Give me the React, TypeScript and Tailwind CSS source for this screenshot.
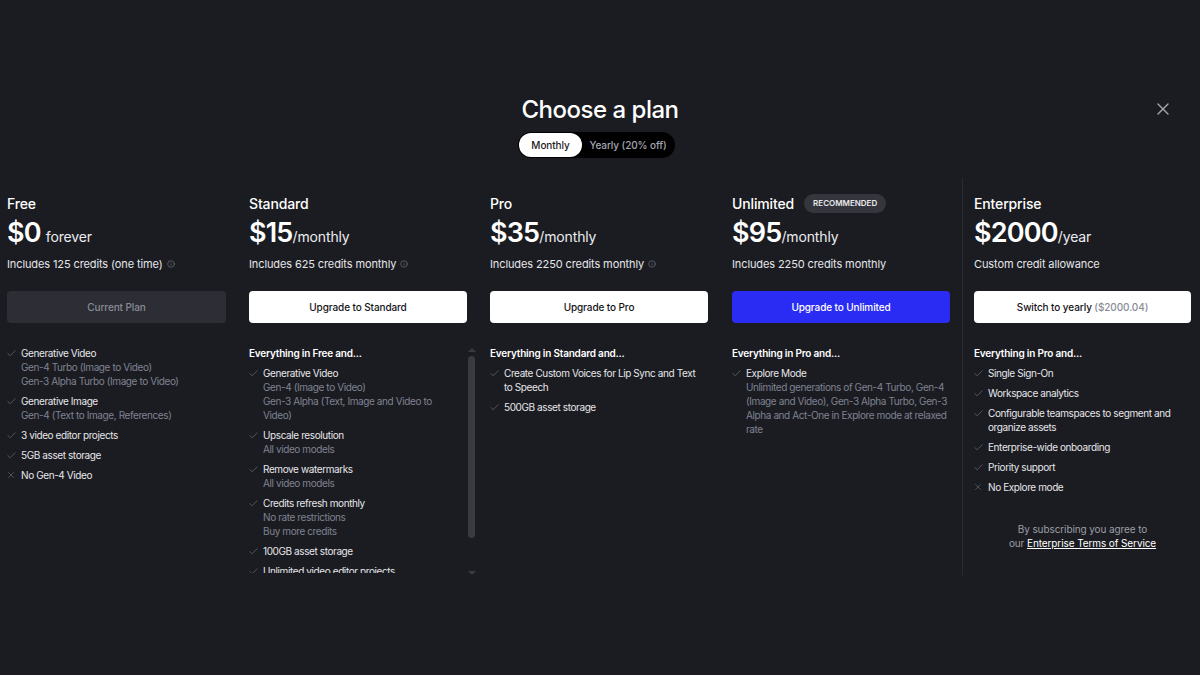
import React from "react";
import { Check, X, Info } from "lucide-react";

type Feature = { text: string; sub?: string[]; no?: boolean };
type Plan = {
  name: string;
  price: string;
  unit: string;
  spaced?: boolean;
  credits: string;
  info?: boolean;
  button: React.ReactNode;
  variant: "current" | "white" | "blue";
  heading?: string;
  features: Feature[];
  badge?: boolean;
  pr?: string;
};

const plans: Plan[] = [
  {
    name: "Free",
    price: "$0",
    unit: "forever",
    spaced: true,
    credits: "Includes 125 credits (one time)",
    info: true,
    button: "Current Plan",
    variant: "current",
    features: [
      { text: "Generative Video", sub: ["Gen-4 Turbo (Image to Video)", "Gen-3 Alpha Turbo (Image to Video)"] },
      { text: "Generative Image", sub: ["Gen-4 (Text to Image, References)"] },
      { text: "3 video editor projects" },
      { text: "5GB asset storage" },
      { text: "No Gen-4 Video", no: true },
    ],
  },
  {
    name: "Standard",
    price: "$15",
    unit: "/monthly",
    credits: "Includes 625 credits monthly",
    info: true,
    button: "Upgrade to Standard",
    variant: "white",
    heading: "Everything in Free and...",
    features: [
      { text: "Generative Video", sub: ["Gen-4 (Image to Video)", "Gen-3 Alpha (Text, Image and Video to Video)"] },
      { text: "Upscale resolution", sub: ["All video models"] },
      { text: "Remove watermarks", sub: ["All video models"] },
      { text: "Credits refresh monthly", sub: ["No rate restrictions", "Buy more credits"] },
      { text: "100GB asset storage" },
      { text: "Unlimited video editor projects" },
      { text: "Custom voices for Lip Sync" },
    ],
  },
  {
    name: "Pro",
    price: "$35",
    unit: "/monthly",
    credits: "Includes 2250 credits monthly",
    info: true,
    button: "Upgrade to Pro",
    variant: "white",
    heading: "Everything in Standard and...",
    pr: "pr-[8px]",
    features: [
      { text: "Create Custom Voices for Lip Sync and Text to Speech" },
      { text: "500GB asset storage" },
    ],
  },
  {
    name: "Unlimited",
    price: "$95",
    unit: "/monthly",
    credits: "Includes 2250 credits monthly",
    button: "Upgrade to Unlimited",
    variant: "blue",
    badge: true,
    heading: "Everything in Pro and...",
    features: [
      {
        text: "Explore Mode",
        sub: [
          "Unlimited generations of Gen-4 Turbo, Gen-4 (Image and Video), Gen-3 Alpha Turbo, Gen-3 Alpha and Act-One in Explore mode at relaxed rate",
        ],
      },
    ],
  },
  {
    name: "Enterprise",
    price: "$2000",
    unit: "/year",
    credits: "Custom credit allowance",
    button: (
      <span>
        Switch to yearly <span className="text-[#8a8d99]">($2000.04)</span>
      </span>
    ),
    variant: "white",
    heading: "Everything in Pro and...",
    features: [
      { text: "Single Sign-On" },
      { text: "Workspace analytics" },
      { text: "Configurable teamspaces to segment and organize assets" },
      { text: "Enterprise-wide onboarding" },
      { text: "Priority support" },
      { text: "No Explore mode", no: true },
    ],
  },
];

function FeatureList({ plan, pr }: { plan: Plan; pr: string }) {
  return (
    <div className={`flex flex-col gap-[6px] tracking-[-0.025em] ${pr}`}>
      {plan.heading && (
        <div className="text-[10px] leading-[14px] font-semibold text-white tracking-[-0.02em]">{plan.heading}</div>
      )}
      {plan.features.map((f, i) => (
        <div key={i} className="flex">
          <div className="w-[14px] shrink-0 pt-[2px] -ml-[1px]">
            {f.no ? (
              <X size={10} strokeWidth={1.5} className="text-[#6c6f79]" />
            ) : (
              <Check size={11} strokeWidth={1.5} className="text-[#6c6f79]" />
            )}
          </div>
          <div className="flex flex-col pl-[1px]">
            <div className="text-[10px] leading-[14px] text-[#e6e6ea]">{f.text}</div>
            {f.sub?.map((s, j) => (
              <div key={j} className="text-[10px] leading-[14px] text-[#7f8291]">
                {s}
              </div>
            ))}
          </div>
        </div>
      ))}
    </div>
  );
}

function Header({ plan }: { plan: Plan }) {
  const btn =
    plan.variant === "current"
      ? "bg-[#2c2d35] text-[#8b8c96]"
      : plan.variant === "blue"
      ? "bg-[#2b2cf3] text-white"
      : "bg-white text-[#141418]";
  return (
    <>
      <div className="flex items-center h-[20px] gap-[10px]">
        <div className="text-[14px] font-medium text-white tracking-[-0.01em]">{plan.name}</div>
        {plan.badge && (
          <div className="h-[19px] px-[9px] rounded-full bg-[#35363d] flex items-center text-[8px] font-semibold text-[#e8e8ec]">
            RECOMMENDED
          </div>
        )}
      </div>
      <div className="flex items-baseline h-[32px] mt-[4px]">
        <span className="text-[27px] leading-[32px] font-semibold text-white tracking-[-0.03em]">{plan.price}</span>
        <span className={`text-[14px] leading-[32px] text-[#ececf0] tracking-[-0.01em] ${plan.spaced ? "ml-[5px]" : ""}`}>
          {plan.unit}
        </span>
      </div>
      <div className="flex items-center gap-[4px] h-[16px] mt-[7px] text-[11px] text-[#e6e6ea] tracking-[-0.01em]">
        {plan.credits}
        {plan.info && <Info size={8} strokeWidth={1.5} className="text-[#8a8d99]" />}
      </div>
      <div
        className={`mt-[19px] h-[32px] rounded-[4px] flex items-center justify-center text-[10px] font-medium tracking-[-0.01em] ${btn}`}
      >
        {plan.button}
      </div>
    </>
  );
}

function PlanColumn({ plan }: { plan: Plan }) {
  return (
    <div className="flex flex-col pt-[15px] h-full">
      <Header plan={plan} />
      <div className="mt-[23px]">
        <FeatureList plan={plan} pr={plan.pr ?? "pr-0"} />
      </div>
      {plan.name === "Enterprise" && (
        <div className="mt-[28px] text-center text-[10px] leading-[14px] text-[#9a9ca6] tracking-[-0.01em]">
          By subscribing you agree to
          <br />
          our <span className="text-white underline">Enterprise Terms of Service</span>
        </div>
      )}
    </div>
  );
}

function StandardColumn({ plan }: { plan: Plan }) {
  return (
    <div className="flex flex-col pt-[15px] h-full">
      <Header plan={plan} />
      <div className="mt-[17px] flex w-[227px]">
        <div className="h-[233px] overflow-hidden flex-1 pt-[6px]">
          <FeatureList plan={plan} pr="pr-[12px]" />
        </div>
        <div className="w-[9px] flex flex-col items-center">
          <div className="w-0 h-0 border-l-[4px] border-r-[4px] border-b-[4px] border-l-transparent border-r-transparent border-b-[#3a3b41] mt-[8px]" />
          <div className="w-[7px] h-[182px] mt-[4px] rounded-full bg-[#3a3b41]" />
          <div className="w-0 h-0 border-l-[4px] border-r-[4px] border-t-[4px] border-l-transparent border-r-transparent border-t-[#3a3b41] mt-[33px]" />
        </div>
      </div>
    </div>
  );
}

export default function App() {
  return (
    <div
      className="w-full h-[675px] bg-[#1b1c21] relative overflow-hidden"
      style={{ fontFamily: "Inter, 'Noto Sans', sans-serif" }}
    >
      <button className="absolute left-[1153px] top-[99px] text-[#a3a5ad]">
        <X size={20} strokeWidth={1.6} />
      </button>
      <div className="pt-[94px] flex flex-col items-center">
        <h1 className="text-[24px] leading-[32px] font-medium text-white tracking-[-0.02em]">Choose a plan</h1>
        <div className="mt-[6px] mr-[7px] h-[26px] rounded-full bg-black flex items-center p-[1px] w-[157px]">
          <div className="h-[24px] w-[63px] rounded-full bg-white flex items-center justify-center text-[10px] font-medium text-[#1b1c21] tracking-[-0.01em]">
            Monthly
          </div>
          <div className="flex-1 flex items-center justify-center text-[10px] font-medium text-[#a4a6b2] tracking-[-0.01em]">
            Yearly (20% off)
          </div>
        </div>
      </div>
      <div className="mt-[20px] flex pl-[7px] h-[397px]">
        <div className="w-[219px]">
          <PlanColumn plan={plans[0]} />
        </div>
        <div className="w-[218px] ml-[23px]">
          <StandardColumn plan={plans[1]} />
        </div>
        <div className="w-[218px] ml-[23px]">
          <PlanColumn plan={plans[2]} />
        </div>
        <div className="w-[218px] ml-[24px]">
          <PlanColumn plan={plans[3]} />
        </div>
        <div className="ml-[12px] border-l border-[#2a2b31] pl-[11px]">
          <div className="w-[217px] h-full">
            <PlanColumn plan={plans[4]} />
          </div>
        </div>
      </div>
    </div>
  );
}
